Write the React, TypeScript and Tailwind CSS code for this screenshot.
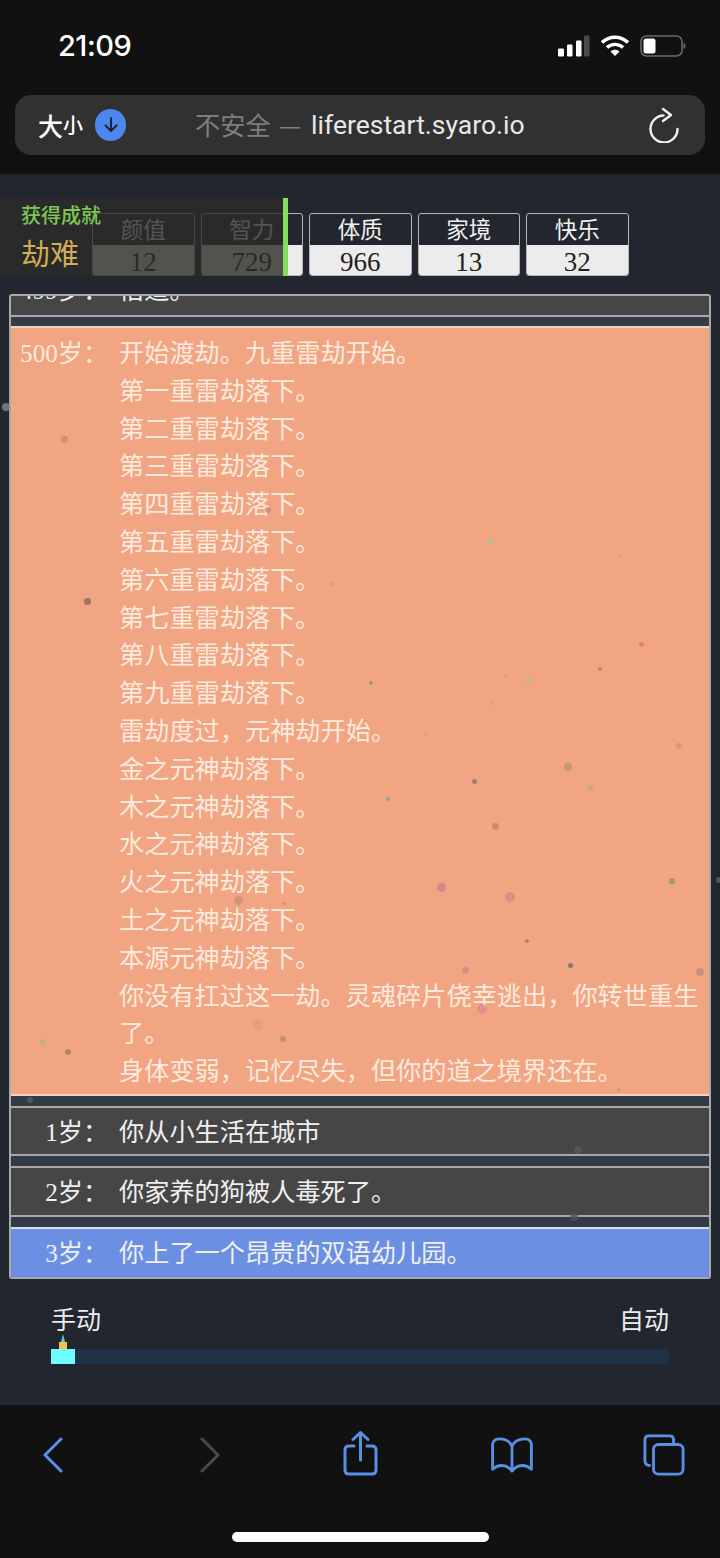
import React from "react";

const stats = [
  { label: "颜值", value: "12" },
  { label: "智力", value: "729" },
  { label: "体质", value: "966" },
  { label: "家境", value: "13" },
  { label: "快乐", value: "32" },
];

const lines = [
  "开始渡劫。九重雷劫开始。",
  "第一重雷劫落下。",
  "第二重雷劫落下。",
  "第三重雷劫落下。",
  "第四重雷劫落下。",
  "第五重雷劫落下。",
  "第六重雷劫落下。",
  "第七重雷劫落下。",
  "第八重雷劫落下。",
  "第九重雷劫落下。",
  "雷劫度过，元神劫开始。",
  "金之元神劫落下。",
  "木之元神劫落下。",
  "水之元神劫落下。",
  "火之元神劫落下。",
  "土之元神劫落下。",
  "本源元神劫落下。",
  "你没有扛过这一劫。灵魂碎片侥幸逃出，你转世重生了。",
  "身体变弱，记忆尽失，但你的道之境界还在。",
];

const dots: [number, number, number, string][] = [
  [6, 407, 8, "#7f8a8a"], [64, 439, 7, "#c98a70"], [87, 601, 7, "#8a6a58"], [491, 541, 6, "#a9c29a"],
  [268, 510, 6, "#c68b78"], [332, 584, 4, "#b9a98a"], [620, 556, 4, "#c0a890"], [641, 644, 5, "#d97a6a"],
  [600, 669, 4, "#a08a78"], [371, 683, 4, "#7f9a6a"], [506, 676, 3, "#b8a888"], [528, 680, 5, "#b2bc88"],
  [420, 715, 3, "#d8b080"], [492, 703, 4, "#c8a878"], [425, 735, 4, "#c0b080"], [679, 746, 6, "#c89a80"],
  [568, 767, 8, "#b89a60"], [474, 781, 5, "#8a7a70"], [590, 787, 5, "#b8a878"], [388, 799, 4, "#7fa0a8"],
  [495, 826, 7, "#c88070"], [672, 881, 6, "#8a9a60"], [441, 887, 9, "#d08090"], [510, 897, 10, "#d88888"],
  [284, 903, 3, "#8aa070"], [238, 900, 9, "#cc9078"], [527, 941, 4, "#a07868"], [570, 965, 5, "#6a6a78"],
  [465, 970, 7, "#d08a8a"], [700, 972, 8, "#c08a78"], [482, 1009, 10, "#e08a88"], [42, 1041, 5, "#a8b878"],
  [68, 1052, 6, "#a87868"], [283, 1039, 6, "#b08878"], [258, 1025, 10, "#e89a80"], [30, 1100, 6, "#5a6068"],
  [578, 1150, 8, "#555a5a"], [574, 1217, 8, "#4a555a"], [719, 880, 6, "#5a6068"], [619, 1090, 4, "#c89a80"],
];

function Age({ age }: { age: string }) {
  return (
    <span className="w-[99px] shrink-0 whitespace-nowrap">
      <span className="inline-block w-[63px] text-right">{age}岁</span>：
    </span>
  );
}

function Row({ age, text, color }: { age: string; text: string; color: string }) {
  return (
    <li className={`flex h-[50.5px] items-center border-y-2 pl-[9px] pt-[3px] ${color}`}>
      <Age age={age} />
      <span>{text}</span>
    </li>
  );
}

export default function App() {
  return (
    <div className="relative flex h-[1558px] w-[720px] flex-col overflow-hidden bg-[#22262f] font-['Noto_Sans_CJK_SC',sans-serif] text-[#f0f0f0]">
      <header className="h-[174px] bg-[#111112] px-[15px]">
        <div className="flex h-[95px] items-center justify-between pb-[4px] pl-[43px] pr-[19px]">
          <span className="font-['Inter',sans-serif] text-[29px] font-medium tracking-[-0.5px] text-white">21:09</span>
          <div className="flex items-center gap-[10px]">
            <svg width="33" height="24" viewBox="0 0 33 24">
              <rect x="1" y="14.500" width="6" height="8" rx="1.200" fill="#fff" />
              <rect x="10" y="10.500" width="5.500" height="12" rx="1.200" fill="#fff" />
              <rect x="19" y="6.500" width="5.500" height="16" rx="1.200" fill="#fff" />
              <rect x="27" y="1.500" width="5.500" height="21" rx="1.200" fill="#4a4a4a" />
            </svg>
            <svg width="30" height="24" viewBox="0 0 30 24" fill="none" stroke="#fff" strokeWidth="3.400">
              <path d="M2 8.500 C9.500 1.500 20.500 1.500 28 8.500" />
              <path d="M7 13.500 C11.500 9.300 18.500 9.300 23 13.500" />
              <path d="M15 22 L10.500 17.500 C13 15.200 17 15.200 19.500 17.500 Z" fill="#fff" stroke="none" />
            </svg>
            <svg width="46" height="24" viewBox="0 0 46 24" fill="none">
              <rect x="1" y="2" width="41" height="20" rx="5.500" stroke="#6b6b6b" strokeWidth="1.500" />
              <rect x="3.500" y="4.500" width="12" height="15" rx="2.500" fill="#fff" />
              <path d="M43.500 9 C45 9.500 45.500 10.500 45.500 12 C45.500 13.500 45 14.500 43.500 15 Z" fill="#6b6b6b" />
            </svg>
          </div>
        </div>
        <div className="flex h-[60px] items-center rounded-[16px] bg-[#313131] pl-[23px] pr-[25px]">
          <span className="text-[25px] leading-none font-medium text-white">大</span>
          <span className="text-[20px] leading-none font-medium text-white">小</span>
          <span className="ml-[12px] flex h-[32px] w-[31px] items-center justify-center rounded-full bg-[#4d86ec]">
            <svg width="18" height="20" viewBox="0 0 18 20" fill="none" stroke="#16233b" strokeWidth="2" strokeLinecap="round" strokeLinejoin="round">
              <path d="M9 3 V16 M3.500 10.500 L9 16 L14.500 10.500" />
            </svg>
          </span>
          <span className="ml-[69px] flex flex-1 items-center whitespace-nowrap text-[25.200px] text-[#7f7f7f]">
            <span>不安全</span>
            <span className="ml-[8px]">—</span>
            <span className="ml-[10px] font-['Roboto',sans-serif] text-[26.500px] text-[#e8e8e8]">liferestart.syaro.io</span>
          </span>
          <svg width="32" height="36" viewBox="0 0 32 36" fill="none" stroke="#f2f2f2" strokeWidth="2.400" strokeLinecap="round" strokeLinejoin="round">
            <path d="M15.500 8.500 A13.500 13.500 0 1 0 29.500 22" />
            <path d="M15 2 L23 8 L15 14" />
          </svg>
        </div>
      </header>

      <main className="relative flex flex-1 flex-col font-['Liberation_Serif','Noto_Sans_CJK_SC',serif] text-[25.200px] leading-[37.800px]">
        <ul className="relative ml-[92px] mt-[39px] flex w-[536.500px] justify-between">
          {stats.map((s) => (
            <li key={s.label} className="h-[63px] w-[102.500px] overflow-hidden rounded-[3px] border border-[#b5b5b5] text-center">
              <div className="h-[31px] pt-[3px] text-[22.500px] leading-[28px] text-[#f0f0f0]">{s.label}</div>
              <div className="h-[31px] bg-[#ececec] pt-[3px] text-[27px] leading-[28px] text-[#222]">{s.value}</div>
            </li>
          ))}
        </ul>

        <div className="mx-[9px] mt-[18px] overflow-hidden rounded-[3px] border-2 border-[#a9a9a9]">
          <div className="h-[21px] overflow-hidden border-b-2 border-[#a9a9a9] bg-[#464646]">
            <div className="-mt-[24px] flex pl-[9px]">
              <Age age="499" />
              <span>悟道。</span>
            </div>
          </div>
          <ul className="flex flex-col gap-[10px] bg-[#333b46] pt-[9px]">
            <li className="flex border-y-2 border-[#f5d0bc] bg-[#f1a583] pb-[3px] pl-[9px] pr-[8px] pt-[7px] text-[#fdeadd]">
              <Age age="500" />
              <div>
                {lines.map((l) => (
                  <p key={l}>{l}</p>
                ))}
              </div>
            </li>
            <Row age="1" text="你从小生活在城市" color="border-[#a9a9a9] bg-[#464646]" />
            <Row age="2" text="你家养的狗被人毒死了。" color="border-[#a9a9a9] bg-[#464646]" />
            <Row age="3" text="你上了一个昂贵的双语幼儿园。" color="border-t-[#d5dcf2] border-b-transparent bg-[#6b90e3]" />
          </ul>
        </div>

        <div className="mx-[51px] mt-[20px] flex justify-between font-['Noto_Sans_CJK_SC',sans-serif] text-[25px] leading-[38px] text-[#ededed]">
          <span>手动</span>
          <span>自动</span>
        </div>
        <div className="relative mx-[51px] mt-[12px] h-[15px] bg-[#1f3247]">
          <div className="absolute left-0 top-0 h-[15px] w-[24px] bg-[#6ffcff]" />
          <div className="absolute left-[8px] -top-[7px] h-[7px] w-[8px] bg-[#f2c14e]" />
          <svg className="absolute left-[10px] -top-[15px]" width="4" height="8" viewBox="0 0 4 8">
            <path d="M2 0 L4 8 H0 Z" fill="#5ec7d0" />
          </svg>
        </div>
      </main>

      <footer className="relative h-[153px] bg-[#111112]">
        <div className="flex h-[100px] items-center pl-[43px]">
          <svg width="20" height="36" viewBox="0 0 20 36" fill="none" stroke="#5a8fe6" strokeWidth="3" strokeLinecap="round" strokeLinejoin="round">
            <path d="M18 2 L2 18 L18 34" />
          </svg>
          <svg className="ml-[137px]" width="20" height="36" viewBox="0 0 20 36" fill="none" stroke="#4a4a4a" strokeWidth="3" strokeLinecap="round" strokeLinejoin="round">
            <path d="M2 2 L18 18 L2 34" />
          </svg>
          <svg className="ml-[123px] -mt-[4px]" width="35" height="46" viewBox="0 0 35 46" fill="none" stroke="#5a8fe6" strokeWidth="3" strokeLinecap="round" strokeLinejoin="round">
            <path d="M11 16 H6 Q2 16 2 20 V40 Q2 44 6 44 H29 Q33 44 33 40 V20 Q33 16 29 16 H24" />
            <path d="M17.500 30 V2.500 M10 9.500 L17.500 2.500 L25 9.500" />
          </svg>
          <svg className="ml-[112px]" width="44" height="36" viewBox="0 0 46 38" fill="none" stroke="#5a8fe6" strokeWidth="3" strokeLinecap="round" strokeLinejoin="round">
            <path d="M23 10 C21 4 15 2 9 2 C5 2 2.500 5 2.500 8 V34 C8 29 17 28 23 36 C29 28 38 29 43.500 34 V8 C43.500 5 41 2 37 2 C31 2 25 4 23 10 V36" />
          </svg>
          <svg className="ml-[109px]" width="42" height="42" viewBox="0 0 44 44" fill="none" stroke="#5a8fe6" strokeWidth="3" strokeLinejoin="round">
            <path d="M32 11 V6 Q32 2 28 2 H6 Q2 2 2 6 V28 Q2 33 8 33" />
            <rect x="11" y="11" width="31" height="31" rx="5" />
          </svg>
        </div>
        <div className="mx-auto mt-[27px] h-[10px] w-[257px] rounded-full bg-white" />
      </footer>

      <div className="absolute left-0 top-[198px] z-10 h-[78px] w-[288px] border-r-[5px] border-[#86dc5e] bg-[#2c2c28]/80 pl-[21px] pt-[4px]">
        <p className="text-[20px] leading-[26px] font-medium text-[#7dc755]">获得成就</p>
        <p className="mt-[4px] text-[29px] leading-[40px] text-[#d2ad55]">劫难</p>
      </div>

      {dots.map(([x, y, d, c], i) => (
        <span
          key={i}
          className="pointer-events-none absolute rounded-full opacity-80"
          style={{ left: x - d / 2, top: y - d / 2, width: d, height: d, backgroundColor: c }}
        />
      ))}
    </div>
  );
}
